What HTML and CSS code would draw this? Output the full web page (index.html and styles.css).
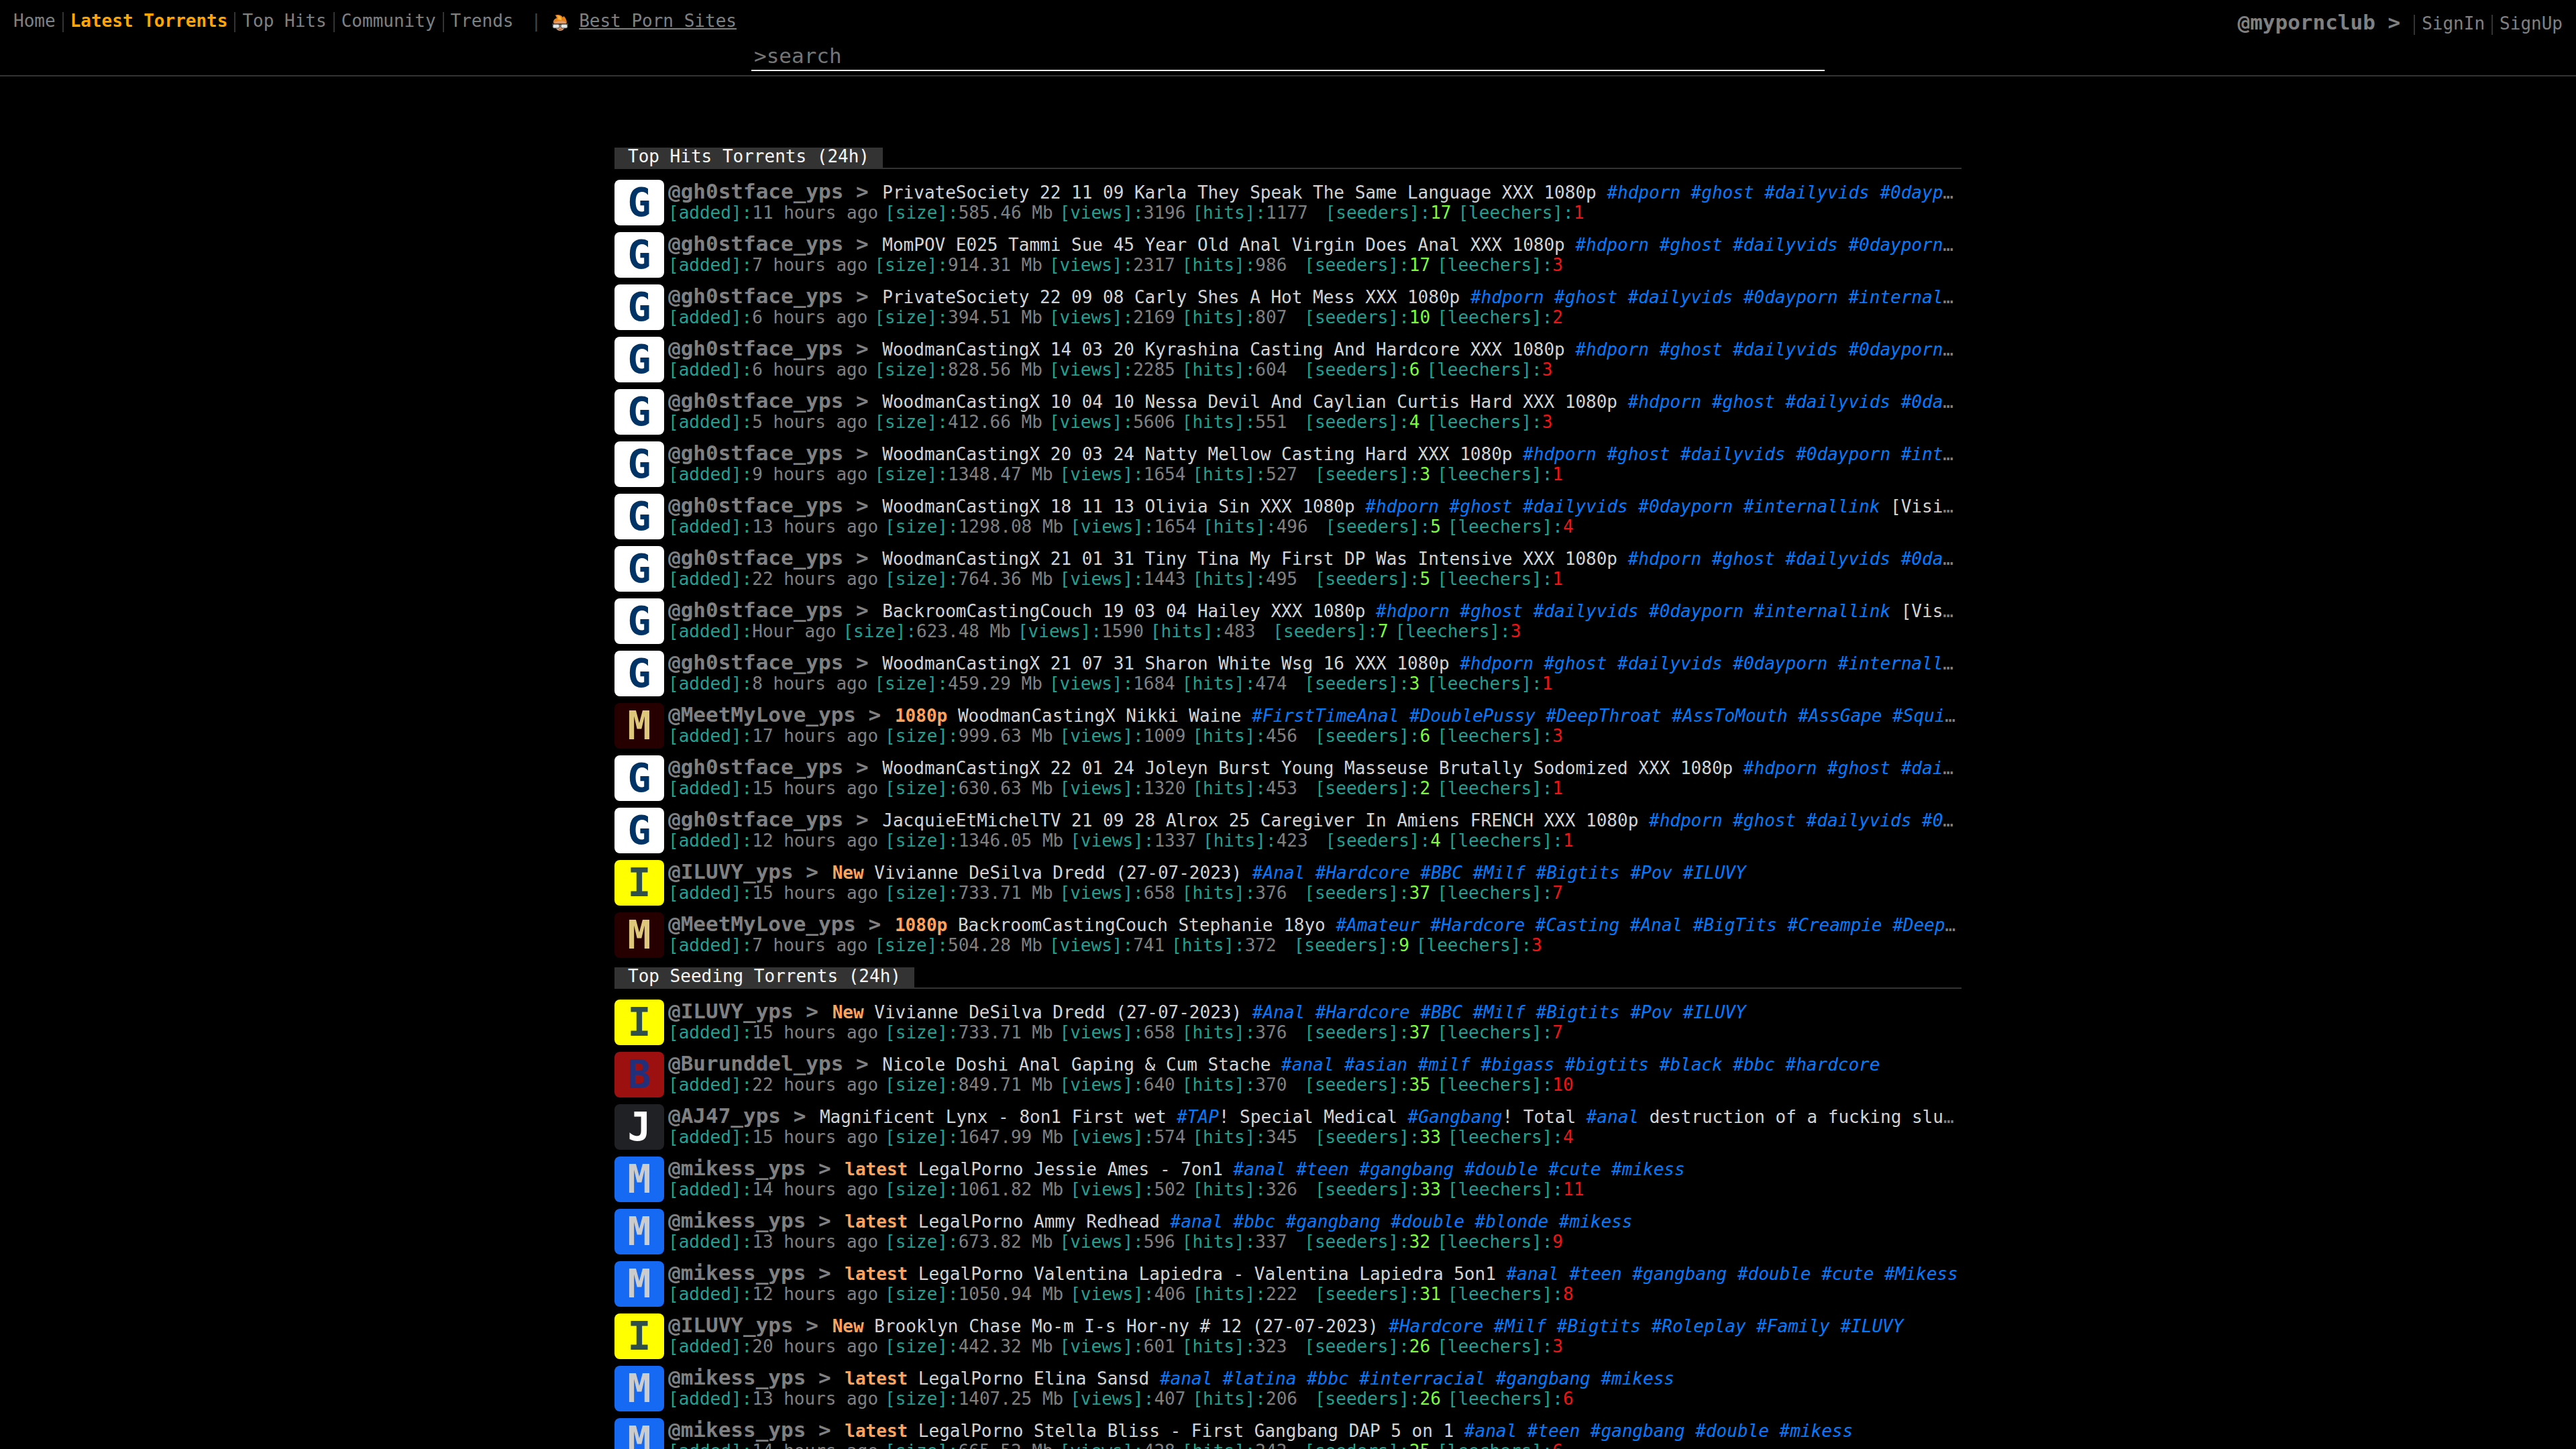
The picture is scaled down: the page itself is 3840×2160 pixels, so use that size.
FILE: index.html
```html
<!DOCTYPE html>
<html lang="en">
<head>
<meta charset="utf-8">
<meta name="viewport" content="width=device-width, initial-scale=1">
<title>Latest Torrents</title>
<link rel="stylesheet" href="styles.css">
</head>
<body>
<header class="top">
  <div class="top-row">
    <nav class="nav">
      <a href="#">Home</a>
      <a href="#" class="current">Latest Torrents</a>
      <a href="#">Top Hits</a>
      <a href="#">Community</a>
      <a href="#">Trends</a>
    </nav>
    <div class="promo">
      <span>|</span>
      <svg class="promo-icon" viewBox="0 0 24 24" aria-hidden="true">
        <path d="M3 12C3 6 20 6 21 12C21 18 17 24 12 24C7 24 3 18 3 12Z" fill="#d99a70"/>
        <path d="M2 13C1 9 3 6 7 5C6 3 6 1 4 1C8 -1 14 0 16 4L17 2C20 4 22 8 22 13C20 9 15 8 11 9C7 9 4 10 2 13Z" fill="#e8821a"/>
        <path d="M8 7C10 5 9 2 6 1C12 1 15 4 14 8Z" fill="#ffb640"/>
        <rect x="0" y="13" width="24" height="2" fill="#3a3a3a"/>
        <rect x="1" y="14" width="10" height="6" rx="2" fill="#e2e6e6" stroke="#444"/>
        <rect x="13" y="14" width="10" height="6" rx="2" fill="#e2e6e6" stroke="#444"/>
        <path d="M10 22h4" stroke="#8a4a30"/>
      </svg>
      <a href="#">Best Porn Sites</a>
    </div>
    <div class="account">
      <strong>@mypornclub &gt;</strong>
      <a href="#">SignIn</a>
      <a href="#">SignUp</a>
    </div>
  </div>
  <form class="search"><input type="text" aria-label="Search" placeholder="&gt;search"></form>
</header>
<main class="content" id="content"></main>
<script src="list.js"></script>
</body>
</html>
```
FILE: styles.css
```css
* { box-sizing: border-box; }

html, body { margin: 0; background: #000; }

body {
  font-family: "DejaVu Sans Mono", monospace;
  font-size: 26px;
  line-height: 26px;
  color: #808080;
}

a { color: inherit; text-decoration: none; }

.top { border-bottom: 2px solid #333; }

.top-row {
  display: flex;
  align-items: flex-start;
  padding: 18px 20px 0;
}

.nav { display: flex; }

.nav a,
.account a { padding-bottom: 4px; }

.nav a + a,
.account a {
  border-left: 2px solid #333;
  padding-left: 10px;
}

.nav a { margin-right: 10px; }

.nav .current { color: #ffa500; font-weight: bold; }

.promo {
  display: flex;
  align-items: flex-start;
  gap: 16px;
  padding-left: 16px;
}

.promo span { color: #444; }
.promo-icon { width: 24px; height: 24px; margin-top: 4px; }
.promo a { text-decoration: underline; }

.account {
  display: flex;
  align-items: baseline;
  gap: 10px;
  margin-left: auto;
  padding-top: 2px;
}

.account strong { font-size: 31px; margin-right: 10px; }

.search {
  display: flex;
  justify-content: center;
}

.search input {
  width: 1600px;
  max-width: 100%;
  height: 44px;
  margin: 10px 0 6px;
  padding: 0 4px;
  border: 0;
  border-bottom: 2px solid #f5f5f5;
  background: transparent;
  color: #808080;
  font: inherit;
  font-size: 31px;
  outline: none;
}

.search input::placeholder { color: #757575; opacity: 1; }

.content {
  max-width: 2008px;
  margin: 0 auto;
  padding-top: 106px;
}

.group { padding-bottom: 4px; }

.group-title {
  display: flex;
  margin: 0 0 16px;
  border-bottom: 2px solid #333;
  font-size: 26px;
  font-weight: normal;
}

.group-title span {
  padding: 0 20px 4px;
  background: #333;
  color: #f5f5f5;
}

.item {
  display: flex;
  gap: 6px;
  height: 68px;
  margin-bottom: 10px;
}

.avatar {
  flex: none;
  width: 74px;
  border-radius: 8px;
  font-size: 58px;
  font-weight: bold;
  line-height: 68px;
  text-align: center;
}

.avatar-g { background: #fff; color: #003366; }
.avatar-m { background: #260000; color: #dec77a; }
.avatar-i { background: #ff0; color: #2f4f4f; }
.avatar-b { background: #9c1010; color: #22307c; }
.avatar-j { background: #202124; color: #fff; }
.avatar-k { background: #1569f3; color: #ccc; }

.info { flex: 1; min-width: 0; }

.line {
  overflow: hidden;
  height: 36px;
  line-height: 34px;
  white-space: pre;
  text-overflow: ellipsis;
}

.user { margin-right: 2px; font-size: 31px; font-weight: bold; }
.title { color: #d3d3d3; }
.title b { color: #ffa35c; }
.title i { color: #007bff; }

.meta {
  display: flex;
  gap: 10px;
  white-space: nowrap;
}

.meta span { color: #20a090; }
.meta .seeders { margin-left: 16px; }
.meta .seeders b { color: #7cfc3c; font-weight: normal; }
.meta .leechers b { color: #f01414; font-weight: normal; }
```
FILE: list.js
```js
const ghostTags = "#hdporn #ghost #dailyvids #0dayporn #internallink [Visit for more]";
const G = ["g", "G", "gh0stface_yps"];
const M = ["m", "M", "MeetMyLove_yps"];
const I = ["i", "I", "ILUVY_yps"];
const B = ["b", "B", "Burunddel_yps"];
const J = ["j", "J", "AJ47_yps"];
const K = ["k", "M", "mikess_yps"];

// user, label, title, added, size, views, hits, seeders, leechers
const groups = [
  ["Top Hits Torrents (24h)", [
    [G, "", "PrivateSociety 22 11 09 Karla They Speak The Same Language XXX 1080p " + ghostTags, "11 hours ago", "585.46", 3196, 1177, 17, 1],
    [G, "", "MomPOV E025 Tammi Sue 45 Year Old Anal Virgin Does Anal XXX 1080p " + ghostTags, "7 hours ago", "914.31", 2317, 986, 17, 3],
    [G, "", "PrivateSociety 22 09 08 Carly Shes A Hot Mess XXX 1080p " + ghostTags, "6 hours ago", "394.51", 2169, 807, 10, 2],
    [G, "", "WoodmanCastingX 14 03 20 Kyrashina Casting And Hardcore XXX 1080p " + ghostTags, "6 hours ago", "828.56", 2285, 604, 6, 3],
    [G, "", "WoodmanCastingX 10 04 10 Nessa Devil And Caylian Curtis Hard XXX 1080p " + ghostTags, "5 hours ago", "412.66", 5606, 551, 4, 3],
    [G, "", "WoodmanCastingX 20 03 24 Natty Mellow Casting Hard XXX 1080p " + ghostTags, "9 hours ago", "1348.47", 1654, 527, 3, 1],
    [G, "", "WoodmanCastingX 18 11 13 Olivia Sin XXX 1080p " + ghostTags, "13 hours ago", "1298.08", 1654, 496, 5, 4],
    [G, "", "WoodmanCastingX 21 01 31 Tiny Tina My First DP Was Intensive XXX 1080p " + ghostTags, "22 hours ago", "764.36", 1443, 495, 5, 1],
    [G, "", "BackroomCastingCouch 19 03 04 Hailey XXX 1080p " + ghostTags, "Hour ago", "623.48", 1590, 483, 7, 3],
    [G, "", "WoodmanCastingX 21 07 31 Sharon White Wsg 16 XXX 1080p " + ghostTags, "8 hours ago", "459.29", 1684, 474, 3, 1],
    [M, "1080p", "WoodmanCastingX Nikki Waine #FirstTimeAnal #DoublePussy #DeepThroat #AssToMouth #AssGape #Squirt #Hardcore", "17 hours ago", "999.63", 1009, 456, 6, 3],
    [G, "", "WoodmanCastingX 22 01 24 Joleyn Burst Young Masseuse Brutally Sodomized XXX 1080p " + ghostTags, "15 hours ago", "630.63", 1320, 453, 2, 1],
    [G, "", "JacquieEtMichelTV 21 09 28 Alrox 25 Caregiver In Amiens FRENCH XXX 1080p " + ghostTags, "12 hours ago", "1346.05", 1337, 423, 4, 1],
    [I, "New", "Vivianne DeSilva Dredd (27-07-2023) #Anal #Hardcore #BBC #Milf #Bigtits #Pov #ILUVY", "15 hours ago", "733.71", 658, 376, 37, 7],
    [M, "1080p", "BackroomCastingCouch Stephanie 18yo #Amateur #Hardcore #Casting #Anal #BigTits #Creampie #DeepThroat", "7 hours ago", "504.28", 741, 372, 9, 3]
  ]],
  ["Top Seeding Torrents (24h)", [
    [I, "New", "Vivianne DeSilva Dredd (27-07-2023) #Anal #Hardcore #BBC #Milf #Bigtits #Pov #ILUVY", "15 hours ago", "733.71", 658, 376, 37, 7],
    [B, "", "Nicole Doshi Anal Gaping & Cum Stache #anal #asian #milf #bigass #bigtits #black #bbc #hardcore", "22 hours ago", "849.71", 640, 370, 35, 10],
    [J, "", "Magnificent Lynx - 8on1 First wet #TAP! Special Medical #Gangbang! Total #anal destruction of a fucking slut #hardcore", "15 hours ago", "1647.99", 574, 345, 33, 4],
    [K, "latest", "LegalPorno Jessie Ames - 7on1 #anal #teen #gangbang #double #cute #mikess", "14 hours ago", "1061.82", 502, 326, 33, 11],
    [K, "latest", "LegalPorno Ammy Redhead #anal #bbc #gangbang #double #blonde #mikess", "13 hours ago", "673.82", 596, 337, 32, 9],
    [K, "latest", "LegalPorno Valentina Lapiedra - Valentina Lapiedra 5on1 #anal #teen #gangbang #double #cute #Mikess", "12 hours ago", "1050.94", 406, 222, 31, 8],
    [I, "New", "Brooklyn Chase Mo-m I-s Hor-ny # 12 (27-07-2023) #Hardcore #Milf #Bigtits #Roleplay #Family #ILUVY", "20 hours ago", "442.32", 601, 323, 26, 3],
    [K, "latest", "LegalPorno Elina Sansd #anal #latina #bbc #interracial #gangbang #mikess", "13 hours ago", "1407.25", 407, 206, 26, 6],
    [K, "latest", "LegalPorno Stella Bliss - First Gangbang DAP 5 on 1 #anal #teen #gangbang #double #mikess", "14 hours ago", "665.52", 428, 242, 25, 6]
  ]]
];

function renderItem([user, label, title, added, size, views, hits, seeders, leechers]) {
  const [style, letter, name] = user;
  const text = title.replace("&", "&amp;").replace(/#\w+/g, "<i>$&</i>");
  const badge = label ? `<b>${label}</b> ` : "";
  return `<article class="item">
    <div class="avatar avatar-${style}">${letter}</div>
    <div class="info">
      <div class="line"><a href="#" class="user">@${name} &gt; </a><a href="#" class="title">${badge}${text}</a></div>
      <div class="meta"><div><span>[added]:</span>${added}</div><div><span>[size]:</span>${size} Mb</div><div><span>[views]:</span>${views}</div><div><span>[hits]:</span>${hits}</div><div class="seeders"><span>[seeders]:</span><b>${seeders}</b></div><div class="leechers"><span>[leechers]:</span><b>${leechers}</b></div></div>
    </div>
  </article>`;
}

document.getElementById("content").innerHTML = groups.map(([heading, items]) =>
  `<section class="group"><h2 class="group-title"><span>${heading}</span></h2>${items.map(renderItem).join("")}</section>`
).join("");
```
